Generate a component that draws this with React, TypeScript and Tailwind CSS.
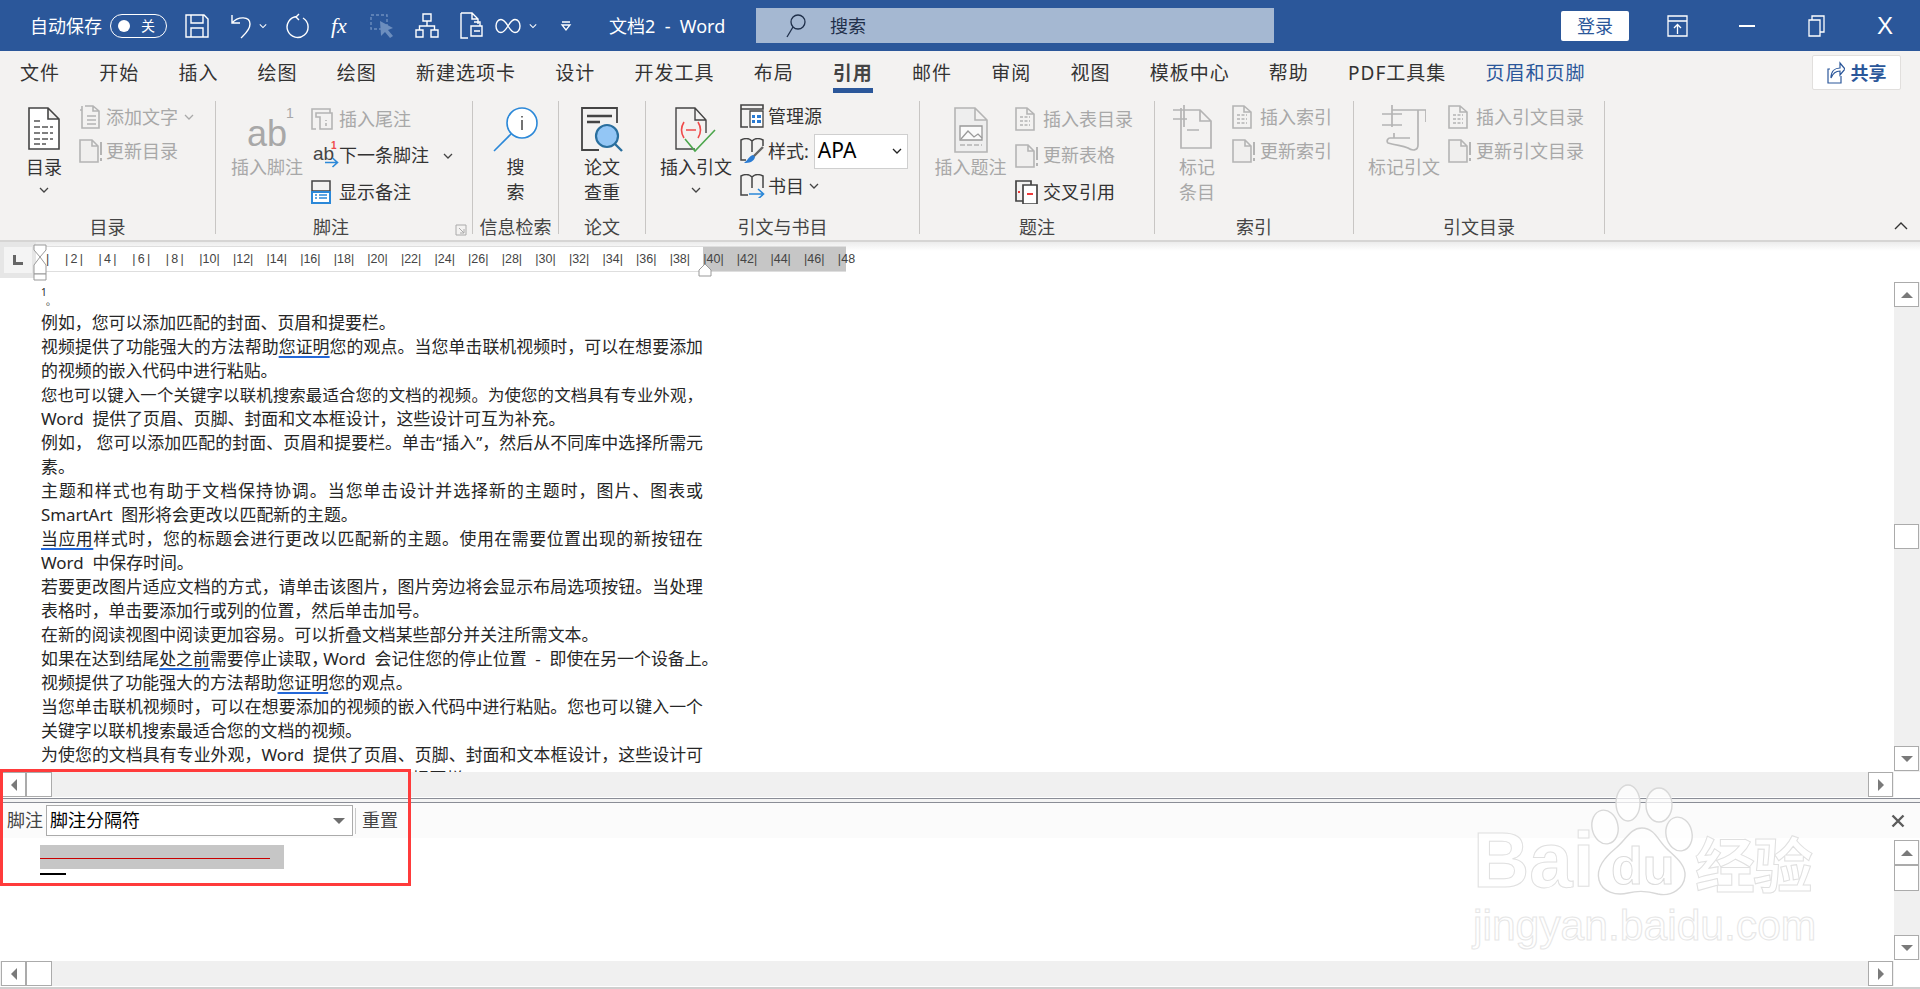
import React from "react";

const FONT = "[font-family:'Noto_Sans','Noto_Sans_CJK_SC',sans-serif]";
const GRAY = "#b4b4b4";
const DARK = "#444";
const BLUE = "#2b88d8";

function Ico({ w, h, children, className = "" }: { w: number; h: number; children: React.ReactNode; className?: string }) {
  return (
    <svg width={w} height={h} viewBox={`0 0 ${w} ${h}`} fill="none" className={"shrink-0 " + className}>
      {children}
    </svg>
  );
}

function Chev({ color = "#444", className = "" }: { color?: string; className?: string }) {
  return (
    <svg width="10" height="6" viewBox="0 0 10 6" fill="none" className={"shrink-0 " + className}>
      <path d="M1 1l4 4 4-4" stroke={color} strokeWidth="1.3" />
    </svg>
  );
}

function Group({ className, label, labelClass = "", children }: { className: string; label: string; labelClass?: string; children: React.ReactNode }) {
  return (
    <section className={"shrink-0 flex flex-col " + className}>
      <div className="flex h-[116px] pt-[4px]">{children}</div>
      <div className={"h-[24px] leading-[22px] text-center text-[18px] text-[#444] whitespace-nowrap " + labelClass}>{label}</div>
    </section>
  );
}

function Sep() {
  return <div className="w-px h-[133px] bg-[#c8c6c4] shrink-0" />;
}

function BigBtn({ className, icon, lines, chevron, off }: { className: string; icon: React.ReactNode; lines: string[]; chevron?: boolean; off?: boolean }) {
  return (
    <div className={"flex flex-col items-center shrink-0 " + className + (off ? " text-[#a8a8a8]" : " text-[#333]")}>
      <div className="h-[50px] flex justify-center">{icon}</div>
      {lines.map((l) => (
        <div key={l} className="h-[25px] leading-[25px] text-[18px] whitespace-nowrap">{l}</div>
      ))}
      {chevron && (
        <div className="h-[20px] flex items-center">
          <Chev />
        </div>
      )}
    </div>
  );
}

function SmallBtn({ icon, label, off, chevron, iconClass = "w-[28px]" }: { icon: React.ReactNode; label: string; off?: boolean; chevron?: React.ReactNode; iconClass?: string }) {
  return (
    <div className={"flex items-center h-[24px] whitespace-nowrap text-[18px] " + (off ? "text-[#a8a8a8]" : "text-[#333]")}>
      <div className={"shrink-0 flex items-center " + iconClass}>{icon}</div>
      <span>{label}</span>
      {chevron}
    </div>
  );
}

function PageIcon({ w = 20, h = 24, color = GRAY, bang }: { w?: number; h?: number; color?: string; bang?: boolean }) {
  return (
    <Ico w={w + (bang ? 4 : 0)} h={h}>
      <path d={`M1 1H${w - 7}L${w - 1} 7V${h - 1}H1Z M${w - 7} 1V7H${w - 1}`} stroke={color} strokeWidth="1.6" fill="#f0efee" />
      {bang && <path d={`M${w + 2} 3V${h - 8}M${w + 2} ${h - 5}V${h - 2}`} stroke={color} strokeWidth="2" />}
    </Ico>
  );
}

function LinesPage({ color = GRAY }: { color?: string }) {
  return (
    <Ico w={20} h={24}>
      <path d="M1 1H12L19 7V23H1Z M12 1V7H19" stroke={color} strokeWidth="1.6" />
      <path d="M5 10h10M5 14h10M5 18h10" stroke={color} strokeWidth="1.5" strokeDasharray="3 1.5" />
    </Ico>
  );
}

function Title() {
  return (
    <header className="h-[51px] shrink-0 bg-[#2b579a] flex items-center text-white relative">
      <span className="ml-[30px] w-[71px] text-[18px] leading-none whitespace-nowrap">自动保存</span>
      <div className="ml-[9px] w-[57px] h-[24px] rounded-full border border-white flex items-center">
        <span className="ml-[7px] w-[12px] h-[12px] rounded-full bg-white" />
        <span className="ml-[11px] text-[14px] leading-none">关</span>
      </div>
      <Ico w={24} h={24} className="ml-[18px]">
        <path d="M1 1H19L23 5V23H1Z M6 1V9H18V1 M6 23V14H18V23" stroke="#fff" strokeWidth="1.4" />
      </Ico>
      <Ico w={22} h={26} className="ml-[21px]">
        <path d="M2 2V10H10 M2 10C8 3 20 3 20 11C20 17 15 21 11 25" stroke="#fff" strokeWidth="1.4" />
      </Ico>
      <Chev color="#fff" className="ml-[7px] w-[8px]" />
      <Ico w={24} h={26} className="ml-[18px]">
        <path d="M14 1L11 4L14 7 M12 3.5A10.5 10.5 0 1 0 18 5" stroke="#fff" strokeWidth="1.4" />
      </Ico>
      <span className="ml-[22px] w-[21px] text-[22px] italic leading-none [font-family:'Liberation_Serif',serif]">fx</span>
      <Ico w={25} h={26} className="ml-[18px] opacity-40">
        <path d="M1 2H17V16H1Z" stroke="#cfe0f5" strokeWidth="1.4" strokeDasharray="3 2" />
        <path d="M10 8L11 23L15 19L20 25L23 23L18 17L23 15Z" fill="#cfe0f5" />
      </Ico>
      <Ico w={24} h={25} className="ml-[20px]">
        <path d="M8 1H16V8H8Z M1 17H8V24H1Z M16 17H23V24H16Z M12 8V13 M4.5 17V13H19.5V17" stroke="#fff" strokeWidth="1.4" />
      </Ico>
      <Ico w={25} h={27} className="ml-[21px]">
        <path d="M1 1H12L18 7V12 M12 1V7H18 M1 1V26H8" stroke="#fff" strokeWidth="1.4" />
        <path d="M11 14H22V24H11Z M14 10H20V14 M14 19H20" stroke="#fff" strokeWidth="1.4" />
      </Ico>
      <Ico w={26} h={16} className="ml-[10px]">
        <path d="M13 8C10 3 8 1.5 6 1.5C3 1.5 1 4.5 1 8C1 11.5 3 14.5 6 14.5C8 14.5 10 13 13 8C16 3 18 1.5 20 1.5C23 1.5 25 4.5 25 8C25 11.5 23 14.5 20 14.5C18 14.5 16 13 13 8Z" stroke="#fff" strokeWidth="1.4" />
      </Ico>
      <Chev color="#fff" className="ml-[8px] w-[8px]" />
      <Ico w={12} h={12} className="ml-[23px]">
        <path d="M2 2H10 M2 5H10L6 10Z" stroke="#fff" strokeWidth="1.3" />
      </Ico>
      <span className="ml-[37px] w-[121px] text-[18px] leading-none whitespace-pre">文档2  -  Word</span>
      <div className="ml-[26px] w-[518px] h-[35px] bg-[#a5b8d2] flex items-center text-[#1f2f4a]">
        <Ico w={20} h={25} className="ml-[30px]">
          <circle cx="12" cy="9" r="7" stroke="#1f2f4a" strokeWidth="1.3" />
          <path d="M7 14L1 24" stroke="#1f2f4a" strokeWidth="1.3" />
        </Ico>
        <span className="ml-[24px] text-[18px] leading-none">搜索</span>
      </div>
      <div className="ml-[287px] w-[68px] h-[30px] bg-white rounded-[2px] text-[#2b579a] text-[18px] leading-[30px] text-center">登录</div>
      <Ico w={21} h={22} className="ml-[38px]">
        <path d="M1 1H20V21H1Z M1 6H20 M10.5 19V10 M7 13L10.5 9.5L14 13" stroke="#fff" strokeWidth="1.3" />
      </Ico>
      <div className="ml-[51px] w-[16px] h-[2px] bg-white" />
      <Ico w={17} h={22} className="ml-[53px]">
        <path d="M1 5H12V21H1Z M4 5V1H16V17H12" stroke="#fff" strokeWidth="1.3" />
      </Ico>
      <span className="ml-[52px] text-[24px] leading-none [font-family:'Liberation_Sans',sans-serif]">X</span>
    </header>
  );
}

const TABS = ["文件", "开始", "插入", "绘图", "绘图", "新建选项卡", "设计", "开发工具", "布局", "引用", "邮件", "审阅", "视图", "模板中心", "帮助", "PDF工具集", "页眉和页脚"];

function Tabs() {
  return (
    <nav className="h-[40px] shrink-0 bg-[#f3f2f1] flex items-start pl-[20px]">
      <div className="flex gap-[39.2px] text-[19px] tracking-[1px] text-[#333] h-[40px] leading-[44px]">
        {TABS.map((t, i) => (
          <div
            key={i}
            className={
              "relative whitespace-nowrap " +
              (t === "引用" ? "font-bold text-[#444] " : "") +
              (t === "页眉和页脚" ? "text-[#2b579a] " : "")
            }
          >
            {t}
            {t === "引用" && <span className="absolute left-0 right-0 bottom-[-2px] h-[5px] bg-[#2b579a]" />}
          </div>
        ))}
      </div>
      <div className="ml-auto mr-[19px] mt-[4px] w-[89px] h-[35px] bg-white border border-[#e1dfdd] rounded-[2px] flex items-center justify-center gap-[6px]">
        <Ico w={18} h={25}>
          <path d="M3 9H1V23H14V16 M4 18C4 11 8 8 13 8V3L18 9L13 15V11C9 11 6 13 4 18Z" stroke="#2b579a" strokeWidth="1.2" />
        </Ico>
        <span className="text-[18px] font-bold text-[#2b579a] leading-none">共享</span>
      </div>
    </nav>
  );
}

function Ribbon() {
  return (
    <div className="h-[151px] shrink-0 bg-[#f3f2f1] border-b-[2px] border-[#d6d5d4] flex pt-[10px] text-[#333]">
      <Group className="w-[215px]" label="目录">
        <BigBtn
          className="ml-[26px] w-[36px]"
          lines={["目录"]}
          chevron
          icon={
            <Ico w={32} h={43} className="mt-[2px]">
              <path d="M1 1H20L31 12V42H1Z M20 1V12H31" stroke={DARK} strokeWidth="1.6" fill="#fff" />
              <path d="M6 14h8M6 20h19M6 26h19M6 32h19M6 37h12" stroke="#555" strokeWidth="1.5" strokeDasharray="6 2" />
            </Ico>
          }
        />
        <div className="ml-[17px] flex flex-col gap-[10px]">
          <SmallBtn off iconClass="w-[27px]" label="添加文字" chevron={<Chev color="#aaa" className="ml-[6px]" />} icon={<Ico w={21} h={24}><path d="M3 5H1 M6 1H14L20 6V23H3V9 M14 1V6H20 M3 1V9 M8 11h9M8 15h9M8 19h9" stroke={GRAY} strokeWidth="1.6" /></Ico>} />
          <SmallBtn off iconClass="w-[27px]" label="更新目录" icon={<PageIcon bang />} />
        </div>
      </Group>
      <Sep />
      <Group className="w-[256px]" label="脚注" labelClass="pr-[26px] relative">
        <BigBtn
          off
          className="ml-[15px] w-[72px]"
          lines={["插入脚注"]}
          icon={
            <div className="relative h-[50px] w-[60px] text-[#a8a8a8] [font-family:'Liberation_Sans',sans-serif]">
              <span className="absolute left-[10px] top-[8px] text-[36px] leading-[42px]">ab</span>
              <span className="absolute left-[49px] top-[0px] text-[14px] leading-[16px]">1</span>
            </div>
          }
        />
        <div className="ml-[8px] pt-[2px] flex flex-col gap-[12.5px]">
          <SmallBtn off label="插入尾注" icon={<Ico w={22} h={22}><path d="M5 21H1V1H19V5 M5 5H21V21H9V9H5Z M15 12v1M15 15v3" stroke={GRAY} strokeWidth="1.6" /></Ico>} />
          <SmallBtn
            iconClass="w-[28px] pl-[2px]"
            label="下一条脚注"
            chevron={<Chev className="ml-[14px]" />}
            icon={
              <div className="relative w-[26px] h-[24px] [font-family:'Liberation_Sans',sans-serif] text-[#444]">
                <span className="absolute left-0 top-[-1px] text-[19px] leading-[22px]">ab</span>
                <span className="absolute left-[18px] top-[-3px] text-[10px] leading-[10px] font-bold text-[#ef4a4a]">1</span>
                <Ico w={14} h={11} className="absolute left-[12px] top-[13px]"><path d="M0 5.5H12M7.5 1L12.5 5.5L7.5 10" stroke={BLUE} strokeWidth="1.6" /></Ico>
              </div>
            }
          />
          <SmallBtn
            label="显示备注"
            icon={
              <Ico w={20} h={24}>
                <path d="M1 1H19V11H1Z" stroke={DARK} strokeWidth="1.5" />
                <path d="M0 11H20V24H0Z" fill={BLUE} />
                <path d="M2 13H18V22H2Z" fill="#fff" />
                <path d="M4 15h2M8 15h8M4 18h2M8 18h8" stroke={BLUE} strokeWidth="1.3" />
              </Ico>
            }
          />
        </div>
      </Group>
      <Ico w={12} h={12} className="-ml-[17px] mr-[5px] mt-[123px]">
        <path d="M1 1H11V11H1Z M4 4L9 9M9 5V9H5" stroke="#aaa" strokeWidth="1" />
      </Ico>
      <Sep />
      <Group className="w-[85px]" label="信息检索">
        <BigBtn
          className="mx-auto w-[72px]"
          lines={["搜", "索"]}
          icon={
            <Ico w={46} h={46} className="mt-[2px]">
              <circle cx="29" cy="16" r="15" stroke={BLUE} strokeWidth="1.6" fill="#fff" />
              <path d="M18 27L1 44" stroke={BLUE} strokeWidth="1.6" />
              <path d="M29 9v1.5M29 13v10" stroke={DARK} strokeWidth="1.5" />
            </Ico>
          }
        />
      </Group>
      <Sep />
      <Group className="w-[86px]" label="论文">
        <BigBtn
          className="mx-auto w-[72px]"
          lines={["论文", "查重"]}
          icon={
            <Ico w={42} h={46} className="mt-[2px]">
              <path d="M18 43H1V1H36V16" stroke={DARK} strokeWidth="1.8" />
              <path d="M6 9H31M6 15H19" stroke={DARK} strokeWidth="2.4" />
              <circle cx="26" cy="29" r="11" fill="#93c6f5" stroke="#2a6f9e" strokeWidth="2.2" />
              <path d="M34 37L41 44" stroke="#2a6f9e" strokeWidth="2.4" />
            </Ico>
          }
        />
      </Group>
      <Sep />
      <Group className="w-[273px]" label="引文与书目">
        <BigBtn
          className="ml-[14px] w-[72px]"
          lines={["插入引文"]}
          chevron
          icon={
            <Ico w={42} h={46} className="mt-[2px]">
              <path d="M20 42H1V1H20L31 13V26 M20 1V13H31" stroke={DARK} strokeWidth="1.4" />
              <path d="M9 15Q4 23 9 31M11 23H21M23 15Q28 23 23 31" stroke="#ef4a4a" strokeWidth="1.6" />
              <path d="M10 32L20 44L40 23" stroke="#4ca64c" strokeWidth="1.6" />
            </Ico>
          }
        />
        <div className="ml-[8px] -mt-[1px] flex flex-col gap-[11px]">
          <SmallBtn
            label="管理源"
            icon={
              <Ico w={24} h={24}>
                <path d="M8 23H1V1H23V5H1" stroke={DARK} strokeWidth="1.6" />
                <path d="M10 7H23V23H10Z" fill="#fff" stroke={DARK} strokeWidth="1.3" />
                <path d="M12 11h3v3h-3zM17 11h4v3h-4zM12 16h3v3h-3zM17 16h4v3h-4z" fill="#2b7cd3" />
              </Ico>
            }
          />
          <div className="flex items-center h-[24px] text-[18px]">
            <div className="w-[28px] shrink-0">
              <Ico w={25} h={26}>
                <path d="M6 22H1V2C5 0 9 0 12 3C15 0 19 0 23 2V8 M12 3V14" stroke={DARK} strokeWidth="1.5" />
                <path d="M23 9L13 19" stroke="#666" strokeWidth="2.4" />
                <path d="M13 17C9 18 8 22 4 25C9 25 14 24 15 19Z" fill="#2b7cd3" />
              </Ico>
            </div>
            <span className="whitespace-nowrap">样式:</span>
            <div className="ml-[5px] w-[94px] h-[35px] bg-white border border-[#cfcfcf] flex items-center pl-[3px] pr-[5px] text-[21px] text-black justify-between">
              APA
              <Chev color="#222" />
            </div>
          </div>
          <SmallBtn
            label="书目"
            chevron={<Chev className="ml-[5px]" />}
            icon={
              <Ico w={25} h={24}>
                <path d="M8 21H1V2C5 0 9 0 12 3C15 0 19 0 23 2V14 M12 3V14" stroke={DARK} strokeWidth="1.5" />
                <path d="M9 20H23M18 15L23.5 20L18 25" stroke={BLUE} strokeWidth="1.6" />
              </Ico>
            }
          />
        </div>
      </Group>
      <Sep />
      <Group className="w-[234px]" label="题注">
        <BigBtn
          off
          className="ml-[14px] w-[73px]"
          lines={["插入题注"]}
          icon={
            <Ico w={34} h={46} className="mt-[2px]">
              <path d="M1 1H21L33 13V45H1Z M21 1V13H33" stroke={GRAY} strokeWidth="1.6" fill="#eee" />
              <path d="M6 19H28V33H6Z" stroke="#999" strokeWidth="1.3" fill="#fafafa" />
              <path d="M7 32L14 24L20 30L24 27L28 31" stroke="#999" strokeWidth="1.3" />
              <path d="M6 38H28" stroke={GRAY} strokeWidth="1.5" strokeDasharray="5 2" />
            </Ico>
          }
        />
        <div className="ml-[8px] pt-[2px] flex flex-col gap-[12.5px]">
          <SmallBtn off label="插入表目录" icon={<LinesPage />} />
          <SmallBtn off label="更新表格" icon={<PageIcon bang />} />
          <SmallBtn
            label="交叉引用"
            icon={
              <Ico w={24} h={24}>
                <path d="M8 21H1V1H16V5" stroke={DARK} strokeWidth="1.7" />
                <path d="M8 5H22V24H8Z" fill="#fff" stroke={DARK} strokeWidth="1.7" />
                <path d="M3 12h2M12 14h6" stroke="#ef3a3a" strokeWidth="2" />
              </Ico>
            }
          />
        </div>
      </Group>
      <Sep />
      <Group className="w-[198px]" label="索引">
        <BigBtn
          off
          className="ml-[24px] w-[36px]"
          lines={["标记", "条目"]}
          icon={
            <Ico w={40} h={47} className="-ml-[8px]">
              <path d="M8 3V43H38V16L27 5H0M14 14H0M14 25H26 M27 5V16H38" stroke={GRAY} strokeWidth="1.7" />
              <path d="M11 0V22" stroke={GRAY} strokeWidth="1.7" />
            </Ico>
          }
        />
        <div className="ml-[17px] flex flex-col gap-[10px]">
          <SmallBtn off label="插入索引" icon={<LinesPage />} />
          <SmallBtn off label="更新索引" icon={<PageIcon bang />} />
        </div>
      </Group>
      <Sep />
      <Group className="w-[250px]" label="引文目录">
        <BigBtn
          off
          className="ml-[14px] w-[72px]"
          lines={["标记引文"]}
          icon={
            <Ico w={44} h={47}>
              <path d="M10 5H44V17 M36 5V40C36 46 30 46 26 43C20 40 16 41 6 38C4 36 6 33 8 33 H28M10 0V22 M0 9H20 M0 20H20 M12 28V33" stroke={GRAY} strokeWidth="1.7" />
            </Ico>
          }
        />
        <div className="ml-[8px] flex flex-col gap-[10px]">
          <SmallBtn off label="插入引文目录" icon={<LinesPage />} />
          <SmallBtn off label="更新引文目录" icon={<PageIcon bang />} />
        </div>
      </Group>
      <Sep />
      <Ico w={14} h={9} className="ml-auto mr-[12px] self-end mb-[10px]">
        <path d="M1 8L7 2L13 8" stroke="#333" strokeWidth="1.4" />
      </Ico>
    </div>
  );
}

function Ruler() {
  const nums = Array.from({ length: 24 }, (_, i) => (i + 1) * 2);
  return (
    <div className="h-[36px] shrink-0 flex relative bg-[linear-gradient(to_bottom,#ececec,#ffffff_9px)]">
      <div className="w-[36px] h-[36px] bg-[#e6e6e6] flex items-center justify-center">
        <div className="w-[28px] h-[26px] bg-[#f4f4f4] flex items-center justify-center">
          <Ico w={10} h={10}>
            <path d="M1.5 0V8.5H10" stroke="#666" strokeWidth="3" />
          </Ico>
        </div>
      </div>
      <div className="ml-[2px] mt-[4px] w-[808px] h-[26px] bg-[linear-gradient(to_right,#fff_665px,#c6c6c6_665px)] border-y border-[#dedede] flex items-center text-[12.5px] text-[#444] [font-family:'Liberation_Sans',sans-serif]">
        <div className="w-[19.2px] shrink-0 text-right pr-[8px]">|</div>
        {nums.map((n) => (
          <div key={n} className="w-[33.6px] shrink-0 flex justify-between px-[7.8px] whitespace-nowrap">
            <span>|</span>
            <span>{n}</span>
            <span>{n < 48 ? "|" : ""}</span>
          </div>
        ))}
      </div>
      <svg width="16" height="38" viewBox="0 0 16 38" className="absolute left-[33px] top-[2px]" fill="none">
        <path d="M1 1H13V6L7 13L1 6Z" fill="#fff" stroke="#999" />
        <path d="M7 13L13 21V30H1V21Z" fill="#fff" stroke="#999" />
        <path d="M1 30H13V36H1Z" fill="#fff" stroke="#999" />
      </svg>
      <svg width="14" height="14" viewBox="0 0 14 14" className="absolute left-[698px] top-[21px]" fill="none">
        <path d="M7 1L13 7V13H1V7Z" fill="#fff" stroke="#999" />
      </svg>
    </div>
  );
}

function Wavy({ children }: { children: React.ReactNode }) {
  return <span className="underline decoration-[#2468d8] decoration-2 underline-offset-[3px] [text-decoration-skip-ink:none]">{children}</span>;
}

const LINE = "h-[24px] leading-[24px] overflow-visible ";
const FULL = LINE + "whitespace-pre-wrap w-[662px] [text-align:justify] [text-align-last:justify]";
const LEFT = LINE + "whitespace-pre";

function DocText() {
  return (
    <div className="flex-1 min-w-0 pl-[41px] overflow-hidden text-[16.9px] text-[#262626]">
      <div className="h-[33px] pt-[8px] text-[10px] leading-[12px]">
        <div>1</div>
        <div className="pl-[5px] -mt-[3px]">。</div>
      </div>
      <div className={LEFT}>例如，您可以添加匹配的封面、页眉和提要栏。</div>
      <div className={FULL}>视频提供了功能强大的方法帮助<Wavy>您证明</Wavy>您的观点。当您单击联机视频时，可以在想要添加</div>
      <div className={LEFT}>的视频的嵌入代码中进行粘贴。</div>
      <div className={FULL + " text-[16.4px]"}>您也可以键入一个关键字以联机搜索最适合您的文档的视频。为使您的文档具有专业外观，</div>
      <div className={LEFT}>Word  提供了页眉、页脚、封面和文本框设计，这些设计可互为补充。</div>
      <div className={FULL}>例如， 您可以添加匹配的封面、页眉和提要栏。单击“插入”，然后从不同库中选择所需元</div>
      <div className={LEFT}>素。</div>
      <div className={FULL}>主题和样式也有助于文档保持协调。当您单击设计并选择新的主题时，图片、图表或</div>
      <div className={LEFT}>SmartArt  图形将会更改以匹配新的主题。</div>
      <div className={FULL}><Wavy>当应用</Wavy>样式时，您的标题会进行更改以匹配新的主题。使用在需要位置出现的新按钮在</div>
      <div className={LEFT}>Word  中保存时间。</div>
      <div className={FULL}>若要更改图片适应文档的方式，请单击该图片，图片旁边将会显示布局选项按钮。当处理</div>
      <div className={LEFT}>表格时，单击要添加行或列的位置，然后单击加号。</div>
      <div className={LEFT}>在新的阅读视图中阅读更加容易。可以折叠文档某些部分并关注所需文本。</div>
      <div className={LEFT}>如果在达到结尾<Wavy>处之前</Wavy>需要停止读取<span className="tracking-[-5px]">，</span>Word  会记住您的停止位置  -  即使在另一个设备上。</div>
      <div className={LEFT}>视频提供了功能强大的方法帮助<Wavy>您证明</Wavy>您的观点。</div>
      <div className={FULL}>当您单击联机视频时，可以在想要添加的视频的嵌入代码中进行粘贴。您也可以键入一个</div>
      <div className={LEFT}>关键字以联机搜索最适合您的文档的视频。</div>
      <div className={FULL}>为使您的文档具有专业外观，Word  提供了页眉、页脚、封面和文本框设计，这些设计可</div>
      <div className={LEFT}>互为补充。例如，您可以添加匹配的封面、页眉和提要栏。</div>
    </div>
  );
}

function ScrollBtn({ dir, className = "" }: { dir: "up" | "down" | "left" | "right"; className?: string }) {
  const d = { up: "M2 11H14L8 5Z", down: "M2 5H14L8 11Z", left: "M11 2V14L5 8Z", right: "M5 2V14L11 8Z" }[dir];
  return (
    <div className={"w-[25px] h-[25px] bg-white border border-[#ababab] flex items-center justify-center shrink-0 " + className}>
      <svg width="16" height="16" viewBox="0 0 16 16">
        <path d={d} fill="#7a7a7a" />
      </svg>
    </div>
  );
}

function HScroll({ className = "" }: { className?: string }) {
  return (
    <div className={"h-[25px] shrink-0 flex " + className}>
      <div className="w-[1894px] bg-[#f0f0f0] flex pl-[1px]">
        <ScrollBtn dir="left" />
        <div className="w-[26px] h-[25px] bg-white border border-[#ababab]" />
        <ScrollBtn dir="right" className="ml-auto mr-[1px]" />
      </div>
    </div>
  );
}

function Watermark() {
  return (
    <>
      <svg width="110" height="120" viewBox="0 0 110 120" className="absolute left-[1590px] top-[782px]" fill="#ffffff" fillOpacity="0.75" stroke="#d8d8d8" strokeWidth="1.4">
        <ellipse cx="38" cy="21" rx="12" ry="18" />
        <ellipse cx="69" cy="23" rx="13" ry="17" />
        <ellipse cx="15" cy="45" rx="13" ry="17" transform="rotate(-12 15 45)" />
        <ellipse cx="89" cy="52" rx="13" ry="17" transform="rotate(-12 89 52)" />
        <path d="M52 46C40 46 36 58 26 66C14 76 6 86 9 98C12 110 26 114 38 111C46 109 58 109 68 112C82 115 94 106 95 94C96 82 84 74 76 66C68 58 64 46 52 46Z" />
      </svg>
      <span className="absolute left-[1611px] top-[836px] text-[52px] leading-[60px] font-bold text-white/80 [-webkit-text-stroke:1px_#dcdcdc] [font-family:'Liberation_Sans',sans-serif]">du</span>
      <span className="absolute left-[1473px] top-[815px] text-[78px] leading-[90px] font-bold text-white/80 [-webkit-text-stroke:1px_#e0e0e0] [font-family:'Liberation_Sans',sans-serif]">Bai</span>
      <span className="absolute left-[1695px] top-[822px] text-[60px] leading-[80px] font-bold text-white/80 tracking-[-2px] [-webkit-text-stroke:1px_#e0e0e0] [font-family:'Noto_Sans_CJK_SC',sans-serif]">经验</span>
      <span className="absolute left-[1473px] top-[900px] text-[42.6px] leading-[50px] text-white [-webkit-text-stroke:1px_#e6e6e6] [font-family:'Liberation_Sans',sans-serif] whitespace-nowrap">jingyan.baidu.com</span>
    </>
  );
}

export default function App() {
  return (
    <div className={"relative w-[1920px] h-[989px] overflow-hidden flex flex-col bg-white " + FONT}>
      <Title />
      <Tabs />
      <Ribbon />
      <Ruler />
      {/* main document pane */}
      <div className="h-[494px] shrink-0 flex">
        <DocText />
        <div className="w-[26px] shrink-0 pt-[4px] flex flex-col">
          <div className="flex-1 bg-[#f0f0f0] flex flex-col">
            <ScrollBtn dir="up" />
            <div className="mt-[217px] w-[25px] h-[25px] bg-white border border-[#ababab]" />
            <ScrollBtn dir="down" className="mt-auto mb-[1px]" />
          </div>
        </div>
      </div>
      <HScroll />
      {/* splitter */}
      <div className="h-[5px] shrink-0 border-y border-[#8a8d96] bg-[#f4f4f4] mt-[1px]" />
      {/* footnote pane */}
      <div className="h-[35px] shrink-0 bg-[#fbfbfb] flex items-center text-[18px] text-[#444]">
        <span className="ml-[7px]">脚注</span>
        <div className="ml-[3px] w-[307px] h-[31px] bg-white border border-[#ababab] flex items-center pl-[3px] pr-[5px] text-black">
          <span>脚注分隔符</span>
          <svg width="16" height="16" viewBox="0 0 16 16" className="ml-auto">
            <path d="M2 5H14L8 11Z" fill="#6e6e6e" />
          </svg>
        </div>
        <div className="ml-[2px] w-px h-[26px] bg-[#c8c8c8]" />
        <span className="ml-[6px]">重置</span>
        <svg width="14" height="14" viewBox="0 0 14 14" className="ml-auto mr-[15px]">
          <path d="M1.5 1.5L12.5 12.5M12.5 1.5L1.5 12.5" stroke="#5c5c5c" strokeWidth="2.4" />
        </svg>
      </div>
      <div className="h-[123px] shrink-0 flex">
        <div className="flex-1 pl-[40px] pt-[7px]">
          <div className="w-[244px] h-[24px] bg-[#c6c6c6] pt-[13px]">
            <div className="w-[230px] h-px bg-[#c80000]" />
          </div>
          <div className="mt-[4px] w-[26px] h-[2px] bg-black" />
        </div>
        <div className="w-[26px] shrink-0 pt-[2px]">
          <div className="h-[120px] bg-[#f0f0f0] flex flex-col">
            <ScrollBtn dir="up" />
            <div className="w-[25px] h-[26px] bg-white border border-[#ababab]" />
            <ScrollBtn dir="down" className="mt-auto" />
          </div>
        </div>
      </div>
      <HScroll />
      <div className="h-[2px] mt-[1px] shrink-0 bg-[#cfcfcf]" />
      <Watermark />
      {/* red annotation frame */}
      <div className="absolute left-0 top-[769px] w-[411px] h-[117px] border-[3px] border-[#ff3b3b] pointer-events-none" />
    </div>
  );
}
